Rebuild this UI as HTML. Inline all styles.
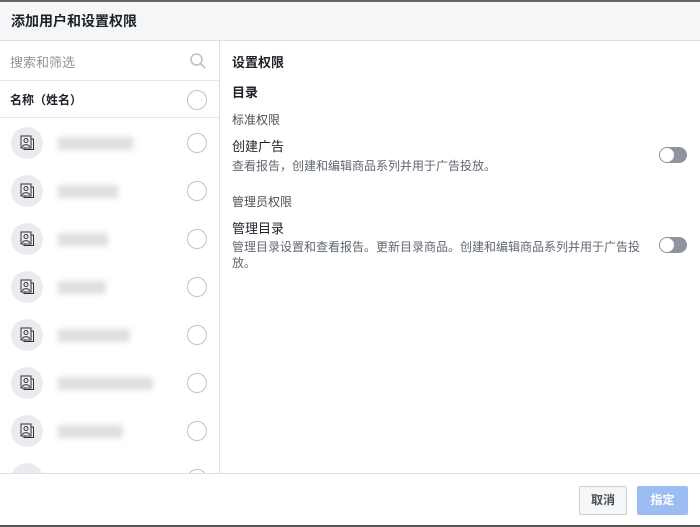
<!DOCTYPE html>
<html><head><meta charset="utf-8"><style>
*{margin:0;padding:0;box-sizing:border-box}
body{width:700px;height:527px;background:#fff;font-family:"Liberation Sans","Noto Sans CJK SC",sans-serif;position:relative;overflow:hidden;color:#1d2129}
.top{position:absolute;left:0;top:0;width:700px;height:2px;background:#666}
.bot{position:absolute;left:0;bottom:0;width:700px;height:2px;background:#555}
.hdr{position:absolute;left:0;top:2px;width:700px;height:39px;background:#f5f6f7;border-bottom:1px solid #dddfe2;font-size:14px;font-weight:bold;padding:9px 11px;color:#1d2129}
.left{position:absolute;left:0;top:41px;width:220px;height:432px;border-right:1px solid #dddfe2;overflow:hidden}
.search{height:40px;border-bottom:1px solid #e5e6e9;font-size:13px;color:#90949c;padding:11px 10px}
.namehdr{height:37px;border-bottom:1px solid #e5e6e9;font-size:12px;font-weight:bold;padding:10px 10px}
.circ{position:absolute;width:20px;height:20px;border:1px solid #bec2c9;border-radius:50%;left:187px}
.row{position:absolute;left:0;width:219px;height:48px}
.av{position:absolute;left:11px;top:8px;width:32px;height:32px;border-radius:50%;background:#e9ebee}
.blur{position:absolute;left:58px;top:18px;height:13px;background:#c8c9cc;filter:blur(3px);opacity:.6}
.t{position:absolute;white-space:nowrap}
.tog{position:absolute;left:659px;width:28px;height:16px;border-radius:8px;background:#8d949e}
.tog:after{content:"";position:absolute;left:1px;top:1px;width:14px;height:14px;border-radius:50%;background:#fff}
.foot{position:absolute;left:0;top:473px;width:700px;height:1px;background:#dddfe2}
.btn{position:absolute;top:486px;height:29px;border-radius:2px;font-size:12px;font-weight:bold;text-align:center;line-height:27px}
</style></head><body>
<div class="top"></div>
<div class="hdr">添加用户和设置权限</div>
<div class="left">
<div class="search">搜索和筛选
<svg style="position:absolute;left:189px;top:11px" width="18" height="18" viewBox="0 0 18 18"><circle cx="7.5" cy="7.5" r="5.5" fill="none" stroke="#bec2c9" stroke-width="1.6"/><path d="M11.5 11.5L16 16" stroke="#bec2c9" stroke-width="1.8"/></svg></div>
<div class="namehdr">名称（姓名）</div>
<div class="circ" style="top:49px"></div>
</div>
<div style="position:absolute;left:0;top:119px;width:219px;height:354px;overflow:hidden">
<div class="row" style="top:0"><div class="av"></div><div class="blur" style="width:75px"></div><div class="circ" style="top:14px"></div></div>
<div class="row" style="top:48px"><div class="av"></div><div class="blur" style="width:60px"></div><div class="circ" style="top:14px"></div></div>
<div class="row" style="top:96px"><div class="av"></div><div class="blur" style="width:50px"></div><div class="circ" style="top:14px"></div></div>
<div class="row" style="top:144px"><div class="av"></div><div class="blur" style="width:48px"></div><div class="circ" style="top:14px"></div></div>
<div class="row" style="top:192px"><div class="av"></div><div class="blur" style="width:72px"></div><div class="circ" style="top:14px"></div></div>
<div class="row" style="top:240px"><div class="av"></div><div class="blur" style="width:95px"></div><div class="circ" style="top:14px"></div></div>
<div class="row" style="top:288px"><div class="av"></div><div class="blur" style="width:65px"></div><div class="circ" style="top:14px"></div></div>
<div class="row" style="top:336px"><div class="av"></div><div class="circ" style="top:14px"></div></div>
</div>
<svg style="position:absolute;left:0;top:0;pointer-events:none" width="220" height="473">
<defs><g id="ic" fill="none" stroke="#333" stroke-width="1"><rect x="-6" y="-7" width="10" height="12"/><circle cx="-1" cy="-2.5" r="2"/><path d="M-4.5 4c0-3 7-3 7 0M4 -4h2.5v10.5h-9.5v-1.5"/></g></defs>
<use href="#ic" x="27" y="143"/><use href="#ic" x="27" y="191"/><use href="#ic" x="27" y="239"/><use href="#ic" x="27" y="287"/><use href="#ic" x="27" y="335"/><use href="#ic" x="27" y="383"/><use href="#ic" x="27" y="431"/>
</svg>
<div class="t" style="left:232px;top:52px;font-size:13px;font-weight:bold">设置权限</div>
<div class="t" style="left:232px;top:82px;font-size:13px;font-weight:bold">目录</div>
<div class="t" style="left:232px;top:111px;font-size:12px;color:#4b4f56">标准权限</div>
<div class="t" style="left:232px;top:136px;font-size:13px">创建广告</div>
<div class="t" style="left:232px;top:157px;font-size:12px;color:#606770">查看报告，创建和编辑商品系列并用于广告投放。</div>
<div class="tog" style="top:147px"></div>
<div class="t" style="left:232px;top:193px;font-size:12px;color:#4b4f56">管理员权限</div>
<div class="t" style="left:232px;top:218px;font-size:13px">管理目录</div>
<div class="t" style="left:232px;top:239px;font-size:12px;color:#606770;white-space:normal;width:412px;line-height:16px">管理目录设置和查看报告。更新目录商品。创建和编辑商品系列并用于广告投放。</div>
<div class="tog" style="top:237px"></div>
<div class="foot"></div>
<div class="btn" style="left:579px;width:48px;background:#f5f6f7;border:1px solid #ccd0d5;color:#4b4f56">取消</div>
<div class="btn" style="left:637px;width:51px;background:#9cbdf2;color:#fff;border:1px solid #9cbdf2">指定</div>
<div class="bot"></div>
</body></html>
